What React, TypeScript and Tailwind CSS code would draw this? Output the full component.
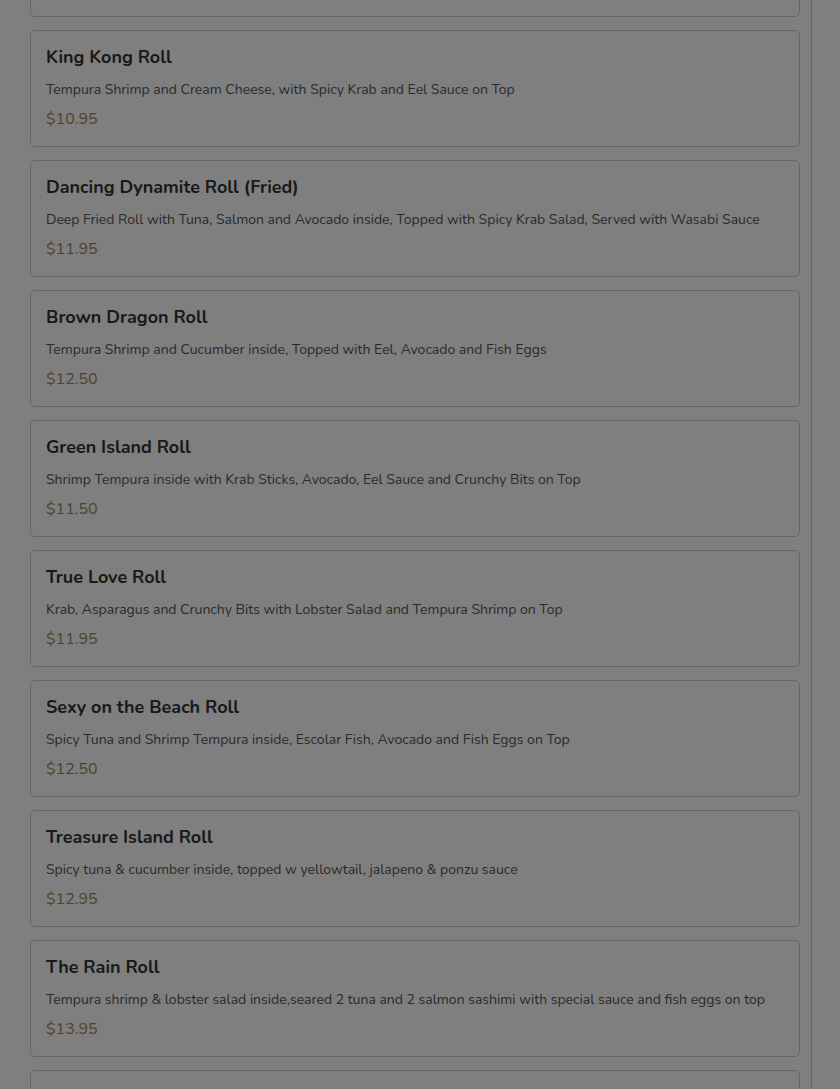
import React from "react"

type Item = { name: string; desc: string; price: string }

const items: Item[] = [
  { name: "Spider Roll", desc: "Soft Shell Crab, Cucumber, Avocado and Fish Eggs", price: "$10.50" },
  { name: "King Kong Roll", desc: "Tempura Shrimp and Cream Cheese, with Spicy Krab and Eel Sauce on Top", price: "$10.95" },
  { name: "Dancing Dynamite Roll (Fried)", desc: "Deep Fried Roll with Tuna, Salmon and Avocado inside, Topped with Spicy Krab Salad, Served with Wasabi Sauce", price: "$11.95" },
  { name: "Brown Dragon Roll", desc: "Tempura Shrimp and Cucumber inside, Topped with Eel, Avocado and Fish Eggs", price: "$12.50" },
  { name: "Green Island Roll", desc: "Shrimp Tempura inside with Krab Sticks, Avocado, Eel Sauce and Crunchy Bits on Top", price: "$11.50" },
  { name: "True Love Roll", desc: "Krab, Asparagus and Crunchy Bits with Lobster Salad and Tempura Shrimp on Top", price: "$11.95" },
  { name: "Sexy on the Beach Roll", desc: "Spicy Tuna and Shrimp Tempura inside, Escolar Fish, Avocado and Fish Eggs on Top", price: "$12.50" },
  { name: "Treasure Island Roll", desc: "Spicy tuna & cucumber inside, topped w yellowtail, jalapeno & ponzu sauce", price: "$12.95" },
  { name: "The Rain Roll", desc: "Tempura shrimp & lobster salad inside,seared 2 tuna and 2 salmon sashimi with special sauce and fish eggs on top", price: "$13.95" },
  { name: "Rock n Roll", desc: "Eel, Avocado and Cucumber with Eel Sauce", price: "$9.95" },
]

function MenuCard({ item }: { item: Item }) {
  return (
    <div className="border border-[#cccccc] rounded-[5px] bg-white px-[15px] pt-[14px] pb-[15px]">
      <h3 className="text-[18px] leading-6 font-bold text-[#333333] whitespace-nowrap">{item.name}</h3>
      <p className="mt-[11px] text-[14px] leading-5 text-[#555555] whitespace-nowrap">{item.desc}</p>
      <p className="mt-[7px] text-[16px] leading-6 text-[#9c8658]">{item.price}</p>
    </div>
  )
}

export default function App() {
  return (
    <div
      className="h-[1089px] overflow-hidden bg-white flex"
      style={{ fontFamily: '"Nunito", "Lato", "Noto Sans", sans-serif' }}
    >
      <div className="w-[812px] border-r border-[#cccccc] shrink-0">
        <div className="-mt-[100px] pl-[30px] pr-[11px] flex flex-col gap-[13px]">
          {items.map((it) => (
            <MenuCard key={it.name} item={it} />
          ))}
        </div>
      </div>
      <div className="flex-1 bg-white" />
      <div className="fixed inset-0 bg-black/50" />
    </div>
  )
}
